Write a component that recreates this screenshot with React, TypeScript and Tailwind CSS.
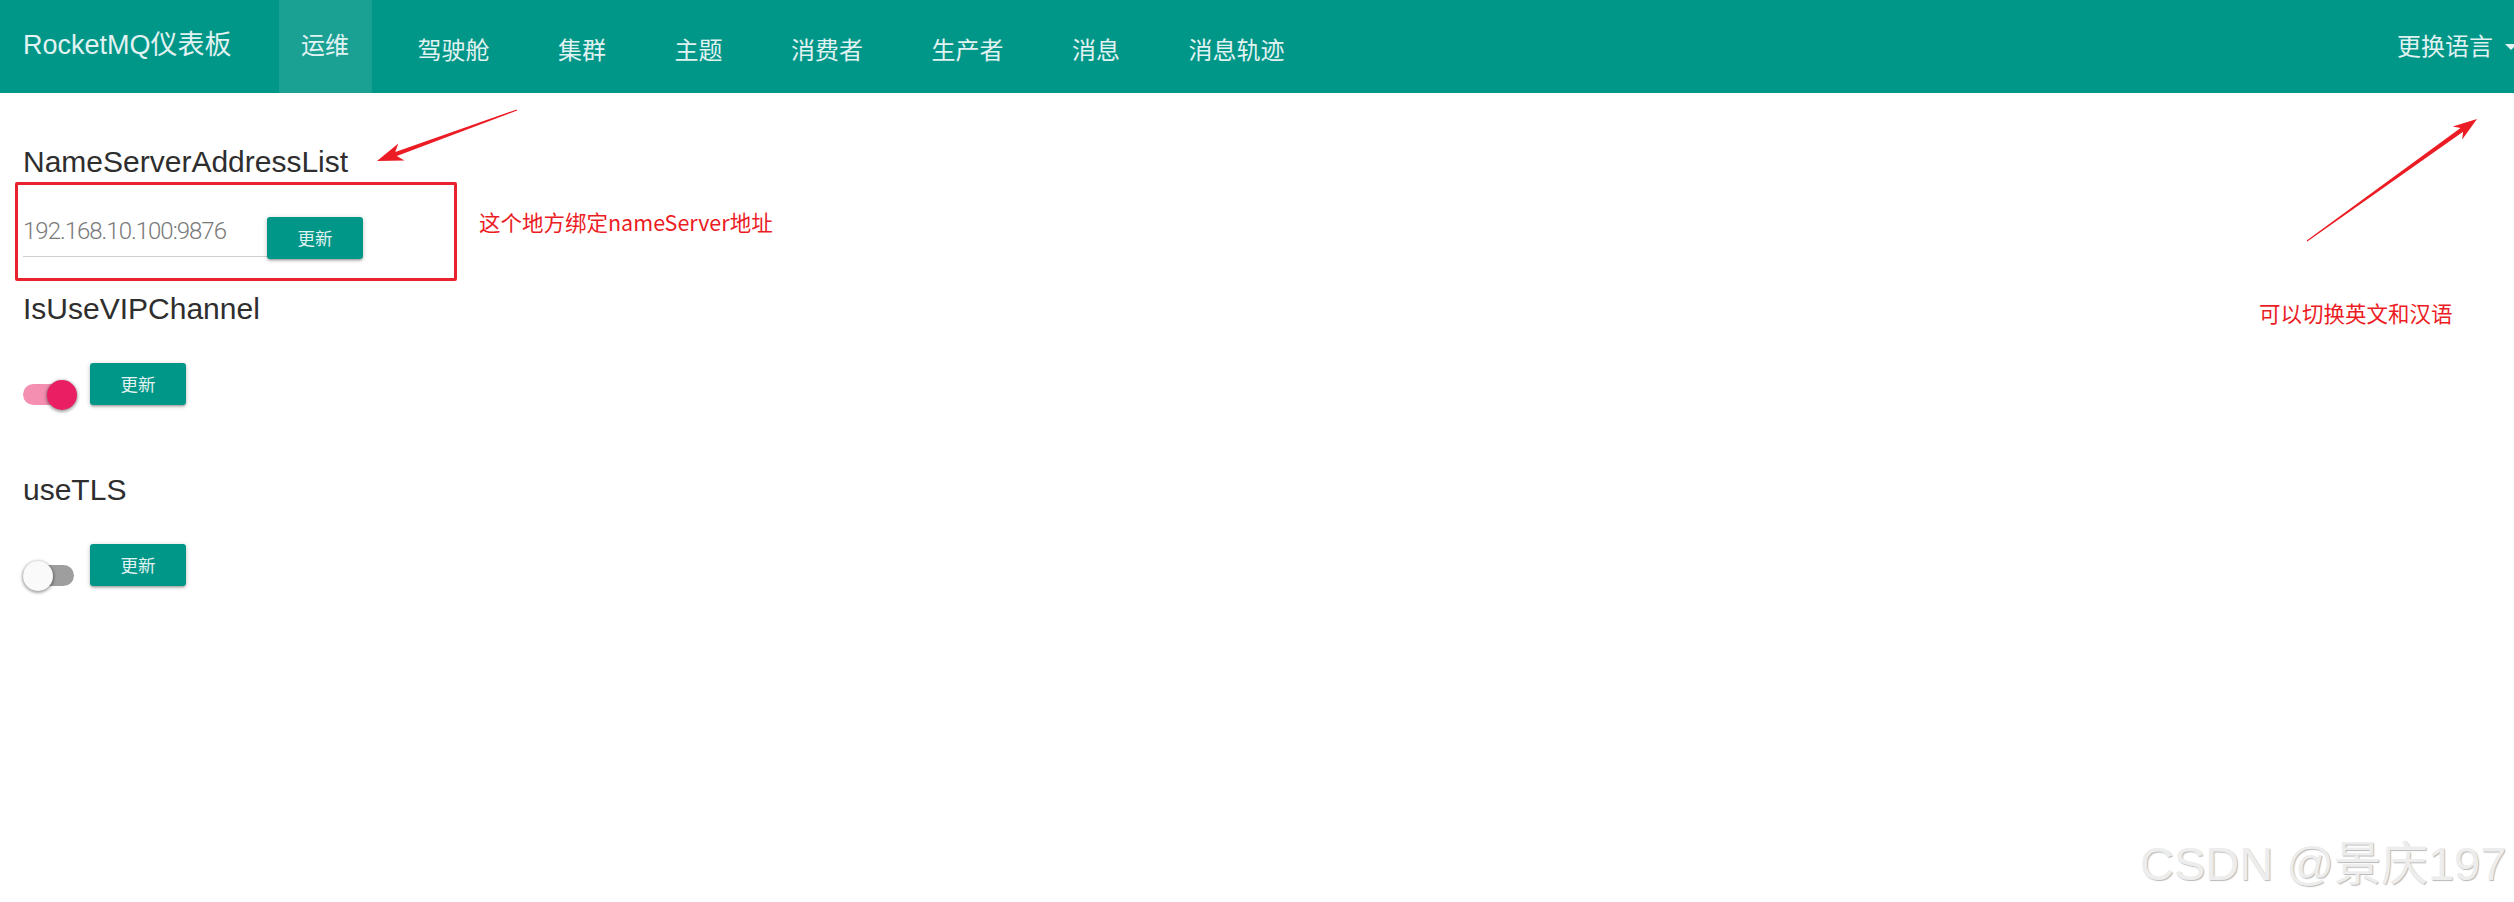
import React from "react";

const NAV = ["运维", "驾驶舱", "集群", "主题", "消费者", "生产者", "消息", "消息轨迹"];

function arrowPoints(sx: number, sy: number, tx: number, ty: number, headLen: number, headHalf: number, shaftStart: number, shaftEnd: number) {
  const dx = tx - sx;
  const dy = ty - sy;
  const len = Math.hypot(dx, dy);
  const ux = dx / len;
  const uy = dy / len;
  const nx = -uy;
  const ny = ux;
  const bx = tx - ux * headLen;
  const by = ty - uy * headLen;
  const nbx = tx - ux * headLen * 0.78;
  const nby = ty - uy * headLen * 0.78;
  const p = (x: number, y: number) => `${x.toFixed(1)},${y.toFixed(1)}`;
  return [
    p(sx + nx * shaftStart, sy + ny * shaftStart),
    p(nbx + nx * shaftEnd, nby + ny * shaftEnd),
    p(bx + nx * headHalf, by + ny * headHalf),
    p(tx, ty),
    p(bx - nx * headHalf, by - ny * headHalf),
    p(nbx - nx * shaftEnd, nby - ny * shaftEnd),
    p(sx - nx * shaftStart, sy - ny * shaftStart),
  ].join(" ");
}

function UpdateButton() {
  return (
    <button className="flex h-[42px] w-[96px] shrink-0 items-center justify-center rounded-[3px] bg-[#009688] text-[17.5px] leading-none text-[#e0f2f1] shadow-[0_2px_2px_0_rgba(0,0,0,0.14),0_3px_1px_-2px_rgba(0,0,0,0.12),0_1px_5px_0_rgba(0,0,0,0.2)] font-['Noto_Sans_CJK_SC',sans-serif]">
      更新
    </button>
  );
}

function Toggle({ on }: { on: boolean }) {
  return (
    <div className={`relative mr-[16px] h-[21px] w-[51px] shrink-0 rounded-full ${on ? "bg-[#f48fb1]" : "bg-[#9e9e9e]"}`}>
      <span
        className={`absolute top-1/2 h-[30px] w-[30px] -translate-y-1/2 rounded-full shadow-[0_1px_3px_1px_rgba(0,0,0,0.35)] ${
          on ? "left-[24px] bg-[#e91e63]" : "left-0 bg-[#fafafa]"
        }`}
      />
    </div>
  );
}

export default function App() {
  return (
    <div className="relative h-[902px] w-[2514px] overflow-hidden bg-white font-['Liberation_Sans','Noto_Sans_CJK_SC',sans-serif]">
      <nav className="flex h-[93px] items-stretch overflow-hidden bg-[#009688] text-[#e0f2f1]">
        <div className="flex items-center pb-[3px] pl-[23px] text-[27px] leading-none">RocketMQ仪表板</div>
        <ul className="ml-[47px] flex gap-[23.5px] font-['Noto_Sans_CJK_SC',sans-serif]">
          {NAV.map((n, i) => (
            <li
              key={n}
              className={`flex items-center px-[22.5px] text-[24px] leading-none ${
                i === 0 ? "bg-white/10 pb-[5px]" : "pt-[5px]"
              }`}
            >
              {n}
            </li>
          ))}
        </ul>
        <div className="-mr-[3px] ml-auto flex items-center gap-[12px] pb-[3px] font-['Noto_Sans_CJK_SC',sans-serif] text-[24px] leading-none">
          <span>更换语言</span>
          <span className="mt-[3px] h-0 w-0 border-x-[6px] border-t-[6px] border-x-transparent border-t-[#e0f2f1]" />
        </div>
      </nav>

      <main className="pl-[23px] text-[#2e2e2e]">
        <h2 className="mt-[51px] h-[36px] text-[30px] leading-[36px]">NameServerAddressList</h2>
        <div className="mt-[37px] flex">
          <div className="h-[40px] w-[244px] border-b border-[#cfcfcf] font-['Roboto',sans-serif] text-[24px] font-light leading-[28px] tracking-[-1px] text-[#7a7a7a]">
            192.168.10.100:9876
          </div>
          <UpdateButton />
        </div>

        <h2 className="mt-[32px] h-[36px] text-[30px] leading-[36px]">IsUseVIPChannel</h2>
        <div className="mt-[36px] flex items-end">
          <Toggle on />
          <UpdateButton />
        </div>

        <h2 className="mt-[67px] h-[36px] text-[30px] leading-[36px]">useTLS</h2>
        <div className="mt-[36px] flex items-end">
          <Toggle on={false} />
          <UpdateButton />
        </div>
      </main>

      {/* annotation overlay */}
      <div className="pointer-events-none absolute inset-0">
        <div className="absolute left-[15px] top-[182px] h-[99px] w-[442px] rounded-[2px] border-[3px] border-[#e8232b]" />
        <div className="absolute left-[479px] top-[211px] whitespace-nowrap font-['Noto_Sans_CJK_SC',sans-serif] text-[21.5px] leading-none text-[#ec1c24]">
          这个地方绑定nameServer地址
        </div>
        <div className="absolute left-[2259px] top-[302px] whitespace-nowrap font-['Noto_Sans_CJK_SC',sans-serif] text-[21.5px] leading-none text-[#ec1c24]">
          可以切换英文和汉语
        </div>
        <svg className="absolute left-0 top-0" width="2514" height="902" viewBox="0 0 2514 902">
          <polygon points={arrowPoints(517, 110, 377, 161, 26, 9, 0.6, 2.2)} fill="#ec1c24" />
          <polygon points={arrowPoints(2307, 241, 2477, 119, 24, 8, 0.6, 2.2)} fill="#ec1c24" />
        </svg>
        <div className="absolute left-[2140px] top-[840px] whitespace-nowrap text-[47px] leading-none text-[#ededed] [text-shadow:1px_1px_1px_rgba(0,0,0,0.28)]">
          CSDN @景庆197
        </div>
      </div>
    </div>
  );
}
